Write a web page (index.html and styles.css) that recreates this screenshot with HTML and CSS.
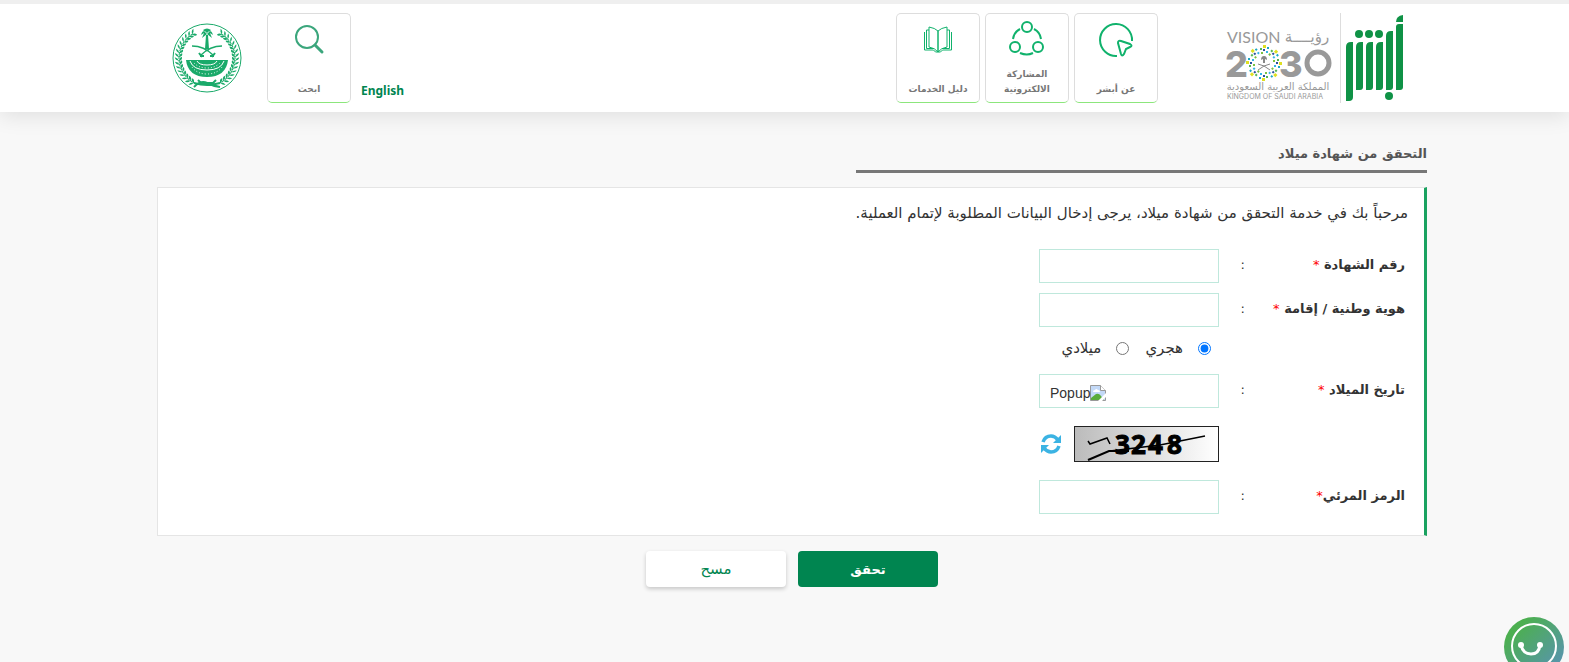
FILE: index.html
```html
<!DOCTYPE html>
<html lang="ar" dir="rtl">
<head>
    <meta charset="UTF-8">
    <meta name="viewport" content="width=device-width, initial-scale=1.0">
    <title>التحقق من شهادة ميلاد</title>
    <link rel="stylesheet" href="styles.css">
</head>
<body>
    <header class="header">
        <a class="logo" href="#" aria-label="أبشر">
            <svg width="60" height="90" viewBox="0 0 60 90" fill="#0f9246">
                <path d="M1 34q0-5 5-5h2v55q0 4-4 4H1z"/>
                <path d="M11 34q0-5 5-5h2v45q0 3-3 3h-4z"/>
                <path d="M21 34q0-5 5-5h2v45q0 3-3 3h-4z"/>
                <path d="M31 34q0-5 5-5h2v45q0 3-3 3h-4z"/>
                <path d="M41 23q0-5 5-5h2v56q0 3-3 3h-4z"/>
                <path d="M51 14q0-3 3-3h4v63q0 3-3 3h-4z"/>
                <path d="M51 9q0-6 7-7v7z"/>
                <circle cx="14" cy="21" r="4"/>
                <circle cx="24" cy="21" r="4"/>
                <circle cx="34" cy="21" r="4"/>
                <circle cx="44" cy="83" r="4"/>
            </svg>
        </a>
        <a class="logo vision" href="#" aria-label="رؤية 2030">
            <svg width="106" height="90" viewBox="0 0 106 90" fill="#999">
                <defs>
                    <g id="ray">
                        <rect x="-1" y="-18" width="3" height="3" fill="#dfe021"/>
                        <rect x="3" y="-16" width="2" height="2" fill="#1aa6c4"/>
                        <rect x="-4" y="-15" width="2" height="2" fill="#52b553"/>
                        <rect x="-1" y="-14" width="2" height="2" fill="#2a4f9c"/>
                        <rect x="2" y="-12" width="2" height="2" fill="#33b5e5"/>
                        <rect x="-3" y="-11" width="2" height="2" fill="#7bc242"/>
                    </g>
                </defs>
                <g direction="ltr" font-family="Inter, sans-serif">
                    <text x="1" y="30" font-size="16" font-family="Lato, sans-serif">VISION</text>
                    <text x="-1" y="64" font-size="36" font-weight="800">2</text>
                    <text x="53" y="64" font-size="36" font-weight="800">3</text>
                    <text x="1" y="86" font-size="7">KINGDOM OF SAUDI ARABIA</text>
                </g>
                <circle cx="92" cy="50" r="11" fill="none" stroke="#999" stroke-width="5"/>
                <text x="81" y="29" font-size="15" text-anchor="middle">رؤيــــة</text>
                <text x="52" y="77" font-size="10" text-anchor="middle">المملكة العربية السعودية</text>
                <g transform="translate(38 50)">
                    <use href="#ray"/>
                    <use href="#ray" transform="rotate(45)"/>
                    <use href="#ray" transform="rotate(90)"/>
                    <use href="#ray" transform="rotate(135)"/>
                    <use href="#ray" transform="rotate(180)"/>
                    <use href="#ray" transform="rotate(225)"/>
                    <use href="#ray" transform="rotate(270)"/>
                    <use href="#ray" transform="rotate(315)"/>
                    <path d="M-3-3q0-4 3-4t3 4l-2-1v4h-2v-4z" fill="#888"/>
                    <path d="M-6 1q6 1 12 6M6 1q-6 1-12 6" fill="none" stroke="#888"/>
                </g>
            </svg>
        </a>
        <nav class="tiles">
            <a class="tile" href="#">
                <svg class="tile-icon" viewBox="0 0 40 40" fill="none" stroke="#10b26c" stroke-width="2">
                    <path d="M36 21A16 16 0 1 0 21 36"/>
                    <path d="M22 23q0-3 3-2l9 3q3 2 0 3l-4 2-2 5q-2 3-3 0z"/>
                </svg>
                <span>عن أبشر</span>
            </a>
            <a class="tile" href="#">
                <svg class="tile-icon" viewBox="0 0 40 40" fill="none" stroke="#10b26c" stroke-width="2">
                    <circle cx="20" cy="7" r="5"/>
                    <circle cx="8" cy="27" r="5"/>
                    <circle cx="31" cy="27" r="5"/>
                    <path d="M6 19Q7 12 13 9M27 9q6 3 7 10M13 33q7 3 13 0"/>
                </svg>
                <span>المشاركة الالكترونية</span>
            </a>
            <a class="tile" href="#">
                <svg class="tile-icon" viewBox="0 0 40 40" fill="none" stroke="#10b26c" stroke-width="1">
                    <path d="M20 11q-3-3-9-4v20q6 1 9 5zM20 11q3-3 9-4v20q-6 1-9 5z"/>
                    <path d="M11 10H8.500v18.500H16M29 10h2.500v18.500H24"/>
                    <path d="M6.500 12v18h9l2 2h5l2-2h9V12"/>
                </svg>
                <span>دليل الخدمات</span>
            </a>
        </nav>
        <a class="lang" href="#" lang="en">English</a>
        <a class="tile" href="#">
            <svg class="tile-icon" viewBox="0 0 40 40" fill="none" stroke="#3ba67c">
                <circle cx="18" cy="17" r="11" stroke-width="2"/>
                <path d="M26 25l7 7" stroke-width="3" stroke-linecap="round"/>
            </svg>
            <span>ابحث</span>
        </a>
        <a class="emblem" href="#" aria-label="وزارة الداخلية">
            <svg width="70" height="70" viewBox="0 0 70 70" fill="#1aaa6a">
                <defs>
                    <g id="leaf">
                        <path d="M-28 0q-1-3-4-4 0 3 4 4M-28 0q0-3 3-4 1 3-3 4"/>
                        <path d="M-28-1v3" stroke="#1aaa6a"/>
                    </g>
                    <g id="branch" transform="translate(35 35)">
                        <use href="#leaf" transform="rotate(-60)"/>
                        <use href="#leaf" transform="rotate(-52)"/>
                        <use href="#leaf" transform="rotate(-44)"/>
                        <use href="#leaf" transform="rotate(-36)"/>
                        <use href="#leaf" transform="rotate(-28)"/>
                        <use href="#leaf" transform="rotate(-20)"/>
                        <use href="#leaf" transform="rotate(-12)"/>
                        <use href="#leaf" transform="rotate(-4)"/>
                        <use href="#leaf" transform="rotate(4)"/>
                        <use href="#leaf" transform="rotate(12)"/>
                        <use href="#leaf" transform="rotate(20)"/>
                        <use href="#leaf" transform="rotate(28)"/>
                        <use href="#leaf" transform="rotate(36)"/>
                        <use href="#leaf" transform="rotate(44)"/>
                        <use href="#leaf" transform="rotate(52)"/>
                        <use href="#leaf" transform="rotate(60)"/>
                    </g>
                </defs>
                <circle cx="35" cy="35" r="34" fill="none" stroke="#1aaa6a"/>
                <use href="#branch" transform="rotate(-2 35 35)"/>
                <use href="#branch" transform="translate(70 0) scale(-1 1) rotate(-2 35 35)"/>
                <!-- النخلة والسيفان -->
                <path d="M34 12h2l1 14h-4zM35 10q-4-5-6 2l3-2-2 5 5-4 5 4-2-5 3 2q-2-7-6-2M31 7q4-3 8 0l-4 4z"/>
                <path d="M20 23q12 0 21 9M50 23q-12 0-21 9" fill="none" stroke="#1aaa6a" stroke-width="1.500"/>
                <path d="M27 30l3 4M43 30l-3 4M28 33h4M38 33h4" stroke="#1aaa6a" stroke-width="2"/>
                <path d="M14 37h42q-2 17-21 17T14 37"/>
                <path d="M18 38q3 9 17 9t17-9M25 38q2 4 10 4t10-4" fill="none" stroke="#fff"/>
                <path d="M20 44q5 7 15 7t15-7M22 40q5 5 13 5t13-5" fill="none" stroke="#fff" stroke-dasharray="1 2"/>
                <path d="M22 64q7-7 13-4t13 4M22 60q7 2 13 2t13-2M26 57l3 3h12l3-3" fill="none" stroke="#1aaa6a" stroke-width="2"/>
            </svg>
        </a>
    </header>

    <main class="container">
        <h1 class="title">التحقق من شهادة ميلاد</h1>
        <form id="verify-form">
            <div class="panel">
                <p class="intro">مرحباً بك في خدمة التحقق من شهادة ميلاد، يرجى إدخال البيانات المطلوبة لإتمام العملية.</p>
                <div class="row">
                    <label for="certificate">رقم الشهادة <b class="req">*</b></label>
                    <span class="colon">:</span>
                    <input class="field" type="text" id="certificate">
                </div>
                <div class="row">
                    <label for="national-id">هوية وطنية / إقامة <b class="req">*</b></label>
                    <span class="colon">:</span>
                    <input class="field" type="text" id="national-id">
                </div>
                <div class="calendar-type">
                    <input type="radio" name="calendar" id="hijri" checked>
                    <label for="hijri">هجري</label>
                    <input type="radio" name="calendar" id="gregorian">
                    <label for="gregorian">ميلادي</label>
                </div>
                <div class="row">
                    <label for="birth-date">تاريخ الميلاد <b class="req">*</b></label>
                    <span class="colon">:</span>
                    <div class="field date-field">
                        <input type="text" id="birth-date">
                        <button type="button" class="popup-btn">
                            <svg width="16" height="16" viewBox="0 0 16 16">
                                <path d="M.5.5h10l5 5v10H.5z" fill="#c3d9f7" stroke="#999"/>
                                <path d="M10.500.5v5h5" fill="#fff" stroke="#999"/>
                                <path d="M3 7q0-2 2-2 1-2 3 0 2 0 2 2z" fill="#fff"/>
                                <path d="M1 15v-2l5-4q3-1 5 2l3 4z" fill="#5aac3a"/>
                                <path d="M8 16l8-8v4l-4 4z" fill="#fff"/>
                            </svg>
                            <span>Popup</span>
                        </button>
                    </div>
                </div>
                <div class="captcha">
                    <svg class="captcha-image" viewBox="0 0 145 36" role="img" aria-label="الرمز المرئي">
                        <defs>
                            <linearGradient id="shade">
                                <stop offset="0" stop-color="#bbb"/>
                                <stop offset="1" stop-color="#fff"/>
                            </linearGradient>
                        </defs>
                        <rect x=".5" y=".5" width="144" height="35" fill="url(#shade)" stroke="#222"/>
                        <g font-family="Noto Sans, sans-serif" font-weight="bold" font-size="26" direction="ltr" stroke="#000">
                            <text x="41" y="28">3</text>
                            <text x="57" y="28">2</text>
                            <text x="74" y="28">4</text>
                            <text x="93" y="28">8</text>
                        </g>
                        <path d="M14 15l2 3 17-6 3 6M36 25l50-6 45-9" fill="none" stroke="#000" stroke-width="1.500"/>
                        <path d="M14 34l21-9h20" fill="none" stroke="#000" stroke-width="2"/>
                    </svg>
                    <button type="button" class="refresh-btn" aria-label="تحديث الرمز">
                        <svg width="20" height="20" viewBox="0 0 20 20">
                            <path d="M2 8Q4 2 10 2q4 0 7 4M18 12q-2 6-8 6-4 0-7-4" fill="none" stroke="#3bb3e3" stroke-width="3.500"/>
                            <path d="M20 1v8h-8zM0 19v-8h8z" fill="#3bb3e3"/>
                        </svg>
                    </button>
                </div>
                <div class="row">
                    <label for="captcha">الرمز المرئي<b class="req">*</b></label>
                    <span class="colon">:</span>
                    <input class="field" type="text" id="captcha">
                </div>
            </div>
            <div class="actions">
                <button type="submit" class="btn btn-primary">تحقق</button>
                <button type="reset" class="btn">مسح</button>
            </div>
        </form>
    </main>

    <button type="button" class="chat" aria-label="المساعدة">
        <svg width="60" height="60" viewBox="0 0 60 60" fill="none" stroke="#fff">
            <circle cx="30" cy="29" r="22" stroke-width="2"/>
            <path d="M17 28q2 9 10 9t9-9" stroke-width="3"/>
            <circle cx="17" cy="28" r="3" fill="#fff" stroke="none"/>
            <circle cx="36" cy="28" r="3" fill="#fff" stroke="none"/>
        </svg>
    </button>
</body>
</html>
```
FILE: styles.css
```css
* {
    box-sizing: border-box;
}
body {
    margin: 0;
    background-color: #f8f8f8;
    border-top: 4px solid #efefef;
    font-family: "DejaVu Sans", sans-serif;
    font-size: 13px;
    color: #333;
}
a {
    text-decoration: none;
}
svg {
    display: block;
}
.header {
    display: flex;
    align-items: center;
    height: 108px;
    padding: 0 164px 0 172px;
    background-color: #fff;
    box-shadow: 0 4px 20px rgba(0, 0, 0, 0.1);
}
.vision {
    margin-right: 4px;
    padding-right: 8px;
    border-right: 1px solid #ddd;
}
.tiles {
    display: flex;
    gap: 5px;
    margin-right: 68px;
    margin-left: auto;
}
.tile {
    display: flex;
    flex-direction: column;
    align-items: center;
    justify-content: space-between;
    width: 84px;
    height: 90px;
    padding: 6px 8px 5px;
    border: 1px solid #ddd;
    border-bottom-color: #8ce67c;
    border-radius: 5px;
    font-size: 9px;
    font-weight: bold;
    line-height: 15px;
    text-align: center;
    color: #777;
}
.tile-icon {
    width: 40px;
    height: 40px;
}
.lang {
    align-self: flex-end;
    margin: 0 0 11px 10px;
    font-family: "Noto Sans", sans-serif;
    font-size: 12px;
    font-weight: bold;
    line-height: 20px;
    color: #008550;
}
.emblem {
    margin-right: 25px;
}
.container {
    padding: 32px 142px 0 157px;
}
.title {
    width: 45%;
    height: 29px;
    margin: 0 0 14px;
    border-bottom: 3px solid #777;
    font-size: 13px;
    line-height: 20px;
    color: #555;
}
.panel {
    padding: 15px 16px 21px;
    background-color: #fff;
    border: 1px solid #e5e5e5;
    border-right: 3px solid #1aa260;
}
.intro {
    margin: 0 0 26px;
    font-size: 15px;
    line-height: 20px;
}
.row {
    display: flex;
    align-items: center;
    margin: 0 3px 10px 0;
}
.row label {
    width: 160px;
    padding-bottom: 3px;
    font-weight: bold;
}
.req {
    color: #f00;
    font-weight: normal;
}
.colon {
    width: 26px;
    padding-bottom: 3px;
}
.field {
    width: 180px;
    height: 34px;
    padding: 0 10px;
    border: 1px solid #bfe8dc;
    background-color: #fff;
    font: inherit;
}
.calendar-type {
    display: flex;
    align-items: center;
    height: 22px;
    margin: 0 197px 15px 0;
    font-size: 15px;
}
.calendar-type input {
    width: 13px;
    height: 13px;
    margin: 0 0 0 15px;
}
.calendar-type label {
    margin-left: 16px;
}
.date-field {
    display: flex;
    align-items: center;
}
.date-field input {
    flex: 1;
    min-width: 0;
    border: 0;
    outline: 0;
}
.popup-btn {
    display: flex;
    align-items: center;
    padding: 3px 0 0;
    border: 0;
    background: none;
    font-family: "Liberation Sans", sans-serif;
    font-size: 14px;
    color: #333;
}
.captcha {
    display: flex;
    align-items: center;
    gap: 13px;
    margin: 18px 189px 18px 0;
}
.captcha-image {
    width: 145px;
    height: 36px;
}
.refresh-btn {
    padding: 0;
    border: 0;
    background: none;
    cursor: pointer;
}
.panel .row:last-child {
    margin-bottom: 0;
}
.actions {
    display: flex;
    justify-content: center;
    gap: 12px;
    padding: 15px 0;
}
.btn {
    width: 140px;
    height: 36px;
    border: 0;
    border-radius: 4px;
    background-color: #fff;
    box-shadow: 0 2px 4px rgba(0, 0, 0, 0.2);
    font: inherit;
    font-size: 15px;
    color: #008550;
    cursor: pointer;
}
.btn-primary {
    background-color: #008550;
    box-shadow: none;
    font-size: 13px;
    font-weight: bold;
    color: #fff;
}
.chat {
    position: fixed;
    right: 5px;
    bottom: -15px;
    width: 60px;
    height: 60px;
    padding: 0;
    border: 0;
    border-radius: 50%;
    background: linear-gradient(135deg, #4caf50 20%, #5b8fc0);
}
```
